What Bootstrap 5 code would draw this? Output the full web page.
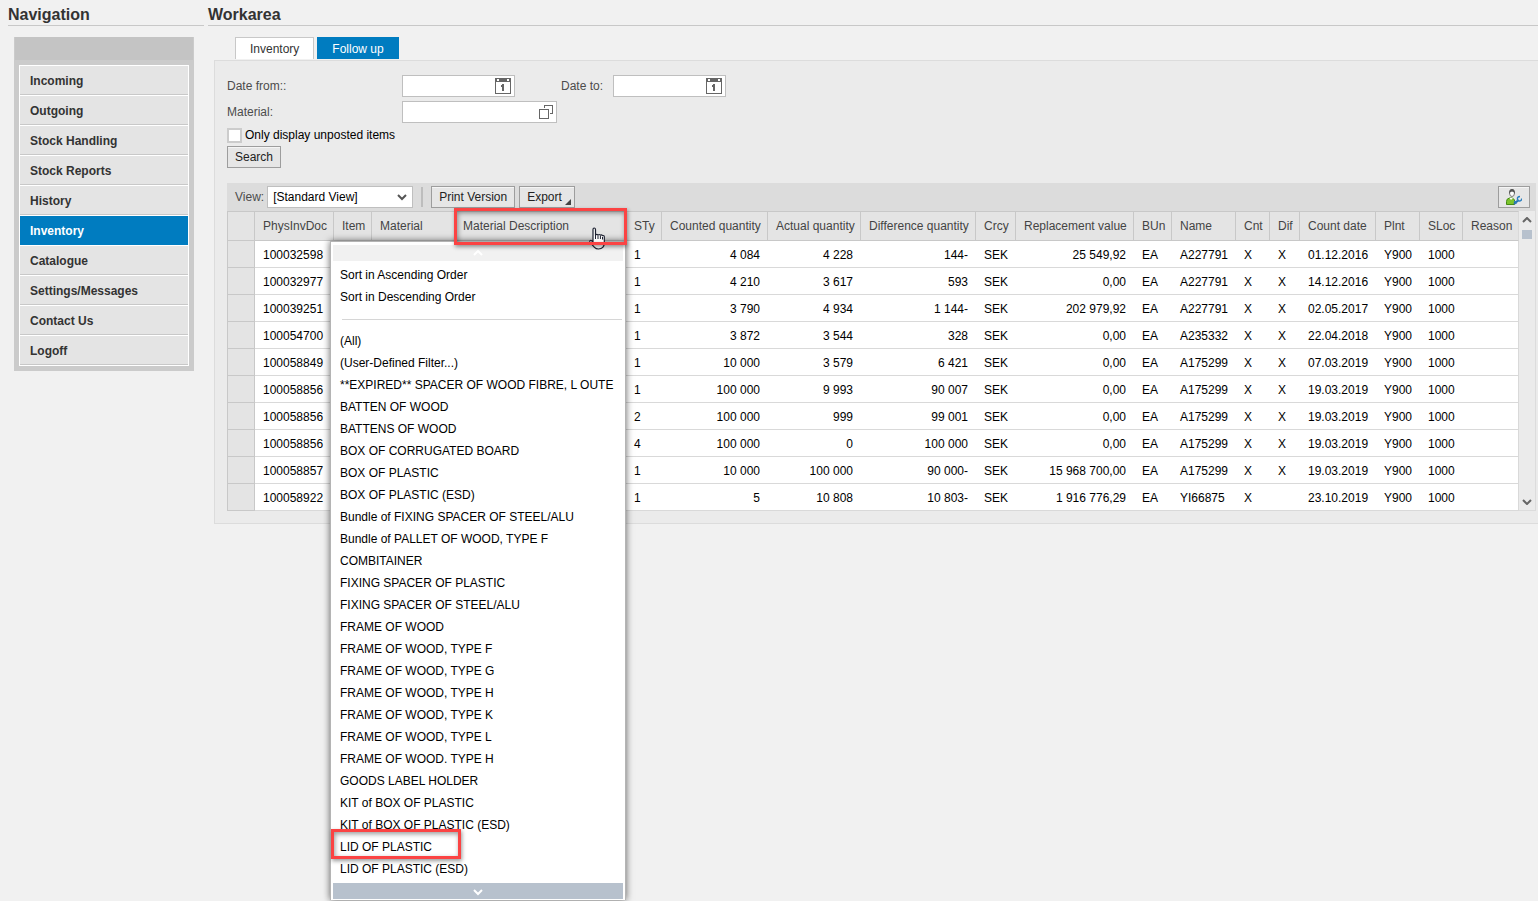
<!DOCTYPE html>
<html lang="en">
<head>
<meta charset="utf-8">
<meta name="viewport" content="width=device-width, initial-scale=1">
<title>Inventory - Follow up</title>
<link href="https://cdn.jsdelivr.net/npm/bootstrap@5.3.0/dist/css/bootstrap.min.css" rel="stylesheet">
<style>
  body { font-family: "Liberation Sans", Arial, sans-serif; font-size: 12px; line-height: 16px; background: #f1f1f1; color: #000; }
  .area-title { font-size: 16px; line-height: 18px; font-weight: 700; color: #333; border-bottom: 1px solid #c8c8c8; margin: 0; padding: 6px 0 1px; }
  .side { width: 196px; }
  .nav-frame { width: 180px; margin: 11px 0 0 6px; background: #cbcbcb; padding: 0 5px 5px; }
  .nav-cap { height: 23px; margin: 0 -4px 5px; background: #c4c4c4; }
  .nav-items { border: 1px solid #fff; border-top: 0; border-radius: 0; }
  .nav-items .list-group-item { border: 0; border-top: 1px solid #fff; border-bottom: 1px solid #c8c8c8; border-radius: 0; margin: 0; height: 30px; padding: 7px 10px 5px; background: #e4e4e4; color: #333; font-weight: 700; }
  .nav-items .list-group-item + .list-group-item.active { margin-top: 0; border-top: 1px solid #fff; background: #007cc0; background-clip: padding-box; color: #fff; border-bottom-color: #007cc0; }
  .tabs { margin: 11px 0 1px 27px; gap: 3px; }
  .tab-btn { height: 22px; border: 1px solid #c8c8c8; border-bottom: 0; background: #fff; color: #333; padding: 0 14px; }
  .tab-btn.active { background: #007cc0; border-color: #007cc0; color: #fff; }
  .panel { margin-left: 6px; background: #ebebeb; border: 1px solid #dcdcdc; border-right: 0; padding: 14px 2px 12px 12px; color: #4c4c4c; }
  .lbl { width: 175px; }
  .lbl-to { width: 52px; margin-left: 46px; }
  .field { position: relative; height: 22px; border: 1px solid #bfbfbf; background: #fff; }
  .field input { width: 100%; height: 20px; border: 0; background: transparent; padding: 0 24px 0 5px; outline: 0; display: block; }
  .field svg { position: absolute; right: 3px; top: 2px; pointer-events: none; }
  .f-date { width: 113px; }
  .f-mat { width: 155px; }
  .tick-row { margin-bottom: 3px; }
  .tick { appearance: none; width: 15px; height: 15px; border: 2px solid #ccc; background: #fff; margin: 0 3px 0 0; }
  .sap-btn { height: 22px; border: 1px solid #9d9d9d; background: #e6e6e6; color: #222; padding: 0 7px; box-shadow: inset 0 1px #f5f5f5; line-height: 20px; display: block; }
  .toolbar { margin-top: 15px; height: 28px; padding: 0 6px 0 8px; background: #dcdcdc; }
  .view-lbl { margin-right: 3px; }
  .view-sel { width: 146px; height: 22px; border: 1px solid #bfbfbf; border-radius: 0; padding: 0 24px 0 5px; font-size: 12px; line-height: 16px; color: #000;
    background: #fff url("data:image/svg+xml,%3Csvg xmlns='http://www.w3.org/2000/svg' width='10' height='7'%3E%3Cpath d='M1 1l4 4 4-4' fill='none' stroke='%23555' stroke-width='2'/%3E%3C/svg%3E") no-repeat right 5px center; background-size: 10px 7px; }
  .sep { width: 2px; height: 20px; background: #bdbdbd; margin: 0 8px; }
  .more { position: relative; }
  .more::after { content: ""; position: absolute; right: 3px; bottom: 2px; border: 3px solid transparent; border-right-color: #444; border-bottom-color: #444; }
  .grid { table-layout: fixed; border-collapse: separate; border-spacing: 0; width: 100%; }
  .grid th, .grid td { padding: 0 8px; white-space: nowrap; }
  .grid th { position: relative; height: 30px; font-weight: 400; color: #444; background: #e4e4e4; border: 1px solid #c8c8c8; border-left: 0; }
  .grid th:first-child { border-left: 1px solid #c8c8c8; }
  .grid td { height: 27px; padding-top: 2px; background: #fff; color: #000; border-bottom: 1px solid #d9d9d9; }
  .grid td:first-child { background: #e4e4e4; border: 1px solid #c8c8c8; border-top: 0; }
  .grid th:last-child { border-right-color: #d9d9d9; }
  .grid td:last-child { border-right: 1px solid #d9d9d9; }
  .n { text-align: right; }
  .vbar { width: 17px; border-right: 1px solid #dcdcdc; border-bottom: 1px solid #dcdcdc; padding: 6px 0 5px; }
  .thumb { width: 10px; height: 9px; background: #b7c1cd; margin-top: 7px; }
  .filter-menu { position: absolute; right: -1px; top: 29px; width: 296px; z-index: 5; background: #fff; border: 1px solid #b4b4b4; border-bottom: 0; box-shadow: 0 0 7px rgba(0,0,0,.6); padding: 3px 2px 1px; color: #000; }
  .menu-cap { height: 16px; background: #f1f1f1; }
  .menu-end { height: 16px; background: #b7c1cd; }
  .filter-menu ul { margin: 3px 0; padding: 0; list-style: none; }
  .filter-menu button { display: block; width: 100%; height: 22px; border: 0; background: none; padding: 0 7px; text-align: left; color: #000; }
  .filter-menu hr { margin: 11px 1px 10px 9px; border: 0; border-top: 1px solid #d6d6d6; opacity: 1; }
  .callout { position: absolute; border: 3px solid #fb4343; pointer-events: none; z-index: 6; box-shadow: 1px 2px 4px rgba(0,0,0,.4), inset 1px 2px 5px rgba(0,0,0,.4); }
  .callout-head { left: -1px; right: -2px; top: -4px; height: 37px; }
  .callout-item { left: -2px; top: -7px; width: 130px; height: 30px; }
  .hand { position: absolute; right: 20px; top: 15px; z-index: 5; }
</style>
</head>
<body>
<div class="d-flex gap-1 ps-2 min-vh-100">
  <aside class="side flex-shrink-0">
    <h1 class="area-title">Navigation</h1>
    <div class="nav-frame">
      <div class="nav-cap"></div>
      <nav class="list-group nav-items">
        <a href="#" class="list-group-item">Incoming</a>
        <a href="#" class="list-group-item">Outgoing</a>
        <a href="#" class="list-group-item">Stock Handling</a>
        <a href="#" class="list-group-item">Stock Reports</a>
        <a href="#" class="list-group-item">History</a>
        <a href="#" class="list-group-item active" aria-current="page">Inventory</a>
        <a href="#" class="list-group-item">Catalogue</a>
        <a href="#" class="list-group-item">Settings/Messages</a>
        <a href="#" class="list-group-item">Contact Us</a>
        <a href="#" class="list-group-item">Logoff</a>
      </nav>
    </div>
  </aside>
  <main class="flex-grow-1">
    <h2 class="area-title">Workarea</h2>
    <div class="d-flex tabs">
      <button type="button" class="tab-btn">Inventory</button>
      <button type="button" class="tab-btn active">Follow up</button>
    </div>
    <section class="panel">
      <form>
        <div class="d-flex align-items-center mb-1">
          <label class="lbl" for="dfrom">Date from::</label>
          <div class="field f-date"><input id="dfrom" type="text">
            <svg width="16" height="16" shape-rendering="crispEdges"><path d="M0 0h16v16H0z" fill="#666"/><path d="M1 4h14v11H1zM2 1h2v2H2zM12 1h2v2h-2z" fill="#fff"/><path d="M7 6h2v7H7V9H6V7h1z" fill="#666"/></svg>
          </div>
          <label class="lbl-to" for="dto">Date to:</label>
          <div class="field f-date"><input id="dto" type="text">
            <svg width="16" height="16" shape-rendering="crispEdges"><path d="M0 0h16v16H0z" fill="#666"/><path d="M1 4h14v11H1zM2 1h2v2H2zM12 1h2v2h-2z" fill="#fff"/><path d="M7 6h2v7H7V9H6V7h1z" fill="#666"/></svg>
          </div>
        </div>
        <div class="d-flex align-items-center mb-1">
          <label class="lbl" for="mat">Material:</label>
          <div class="field f-mat"><input id="mat" type="text">
            <svg width="14" height="16" fill="none" stroke="#666" shape-rendering="crispEdges"><path d="M.5 5.5h9v9h-9zM5.500 4V1.500h8v8H11"/></svg>
          </div>
        </div>
        <div class="d-flex align-items-center tick-row text-black">
          <input class="tick" type="checkbox" id="unposted"><label for="unposted">Only display unposted items</label>
        </div>
        <button type="button" class="sap-btn">Search</button>
      </form>
      <div class="toolbar d-flex align-items-center">
        <label class="view-lbl" for="view">View:</label>
        <select id="view" class="form-select view-sel"><option>[Standard View]</option></select>
        <span class="sep"></span>
        <div class="d-flex gap-1">
          <button type="button" class="sap-btn">Print Version</button>
          <button type="button" class="sap-btn more pe-2 me-0"><span class="me-1">Export</span></button>
        </div>
        <button type="button" class="sap-btn ms-auto" aria-label="Personalize">
          <svg class="d-block" width="16" height="16" viewBox="0 0 16 16"><path d="M.500 15.500v-3q0-3 3-3.500h3l2 2v4.500z" fill="#7cc42c" stroke="#458a12"/><path d="M3.500 9l1.500 2 2-2z" fill="#fff"/><ellipse cx="6" cy="4" rx="2.500" ry="3.500" fill="#fff" stroke="#777"/><path d="M3 5q0-5 3-5t3 5q-1-2.500-3-2.500T3 5z" fill="#555"/><path d="M8 15l4-3.500" fill="none" stroke="#2a6fb0" stroke-width="2.200"/><path d="M14 7.500q-3 0-2.500 3l1.500 1.500q2.500.3 2.700-2.500" fill="none" stroke="#2a7fc0" stroke-width="1.400"/><path d="M8 12.500q2-.5 2.500 2" fill="none" stroke="#2a7fc0" stroke-width="1.200"/></svg>
        </button>
      </div>
      <div class="d-flex">
        <div class="flex-grow-1">
        <table class="grid">
          <colgroup><col style="width:28px"><col style="width:79px"><col style="width:38px"><col style="width:83px"><col style="width:171px"><col style="width:36px"><col style="width:106px"><col style="width:93px"><col style="width:115px"><col style="width:40px"><col style="width:118px"><col style="width:38px"><col style="width:64px"><col style="width:34px"><col style="width:30px"><col style="width:76px"><col style="width:44px"><col style="width:43px"><col></colgroup>
          <thead>
            <tr>
              <th></th><th>PhysInvDoc</th><th>Item</th><th>Material</th>
              <th>Material Description
                <div class="filter-menu">
                  <div class="menu-cap text-center"><svg class="d-block mx-auto" width="10" height="16" fill="none" stroke="#fff" stroke-width="2"><path d="M1 10l4-4 4 4"/></svg></div>
                  <ul>
                    <li><button type="button">Sort in Ascending Order</button></li>
                    <li><button type="button">Sort in Descending Order</button></li>
                    <li><hr></li>
                    <li><button type="button">(All)</button></li>
                    <li><button type="button">(User-Defined Filter...)</button></li>
                    <li><button type="button">**EXPIRED** SPACER OF WOOD FIBRE, L OUTE</button></li>
                    <li><button type="button">BATTEN OF WOOD</button></li>
                    <li><button type="button">BATTENS OF WOOD</button></li>
                    <li><button type="button">BOX OF CORRUGATED BOARD</button></li>
                    <li><button type="button">BOX OF PLASTIC</button></li>
                    <li><button type="button">BOX OF PLASTIC (ESD)</button></li>
                    <li><button type="button">Bundle of FIXING SPACER OF STEEL/ALU</button></li>
                    <li><button type="button">Bundle of PALLET OF WOOD, TYPE F</button></li>
                    <li><button type="button">COMBITAINER</button></li>
                    <li><button type="button">FIXING SPACER OF PLASTIC</button></li>
                    <li><button type="button">FIXING SPACER OF STEEL/ALU</button></li>
                    <li><button type="button">FRAME OF WOOD</button></li>
                    <li><button type="button">FRAME OF WOOD, TYPE F</button></li>
                    <li><button type="button">FRAME OF WOOD, TYPE G</button></li>
                    <li><button type="button">FRAME OF WOOD, TYPE H</button></li>
                    <li><button type="button">FRAME OF WOOD, TYPE K</button></li>
                    <li><button type="button">FRAME OF WOOD, TYPE L</button></li>
                    <li><button type="button">FRAME OF WOOD. TYPE H</button></li>
                    <li><button type="button">GOODS LABEL HOLDER</button></li>
                    <li><button type="button">KIT of BOX OF PLASTIC</button></li>
                    <li><button type="button">KIT of BOX OF PLASTIC (ESD)</button></li>
                    <li class="position-relative"><button type="button">LID OF PLASTIC</button><span class="callout callout-item"></span></li>
                    <li><button type="button">LID OF PLASTIC (ESD)</button></li>
                  </ul>
                  <div class="menu-end"><svg class="d-block mx-auto" width="10" height="16" fill="none" stroke="#fff" stroke-width="2"><path d="M1 7l4 4 4-4"/></svg></div>
                </div>
                <span class="callout callout-head"></span>
                <svg class="hand" width="16" height="25" viewBox="0 0 16 25"><path d="M4 15.500V2.500q0-1.500 1.200-1.500T6.500 2.500V8.500q0-1.200 1.200-1.200T9 8.500q0-1 1.200-1t1.200 1.200q0-.800 1-.800t1.100 1.300q.2-.700.900-.700.900 0 .9 1.300v6q0 3-1.500 4.500t-4.300 1.700q-2.500 0-4-1.700L1 15.500q-.6-1.500.4-2t2.600 2z" fill="#fff" stroke="#1c2030" stroke-width="1.200"/><path d="M6.500 8v4M9 8.500V12M11.400 9v3M13.500 10v2.500" stroke="#1c2030"/></svg>
              </th>
              <th>STy</th><th>Counted quantity</th><th>Actual quantity</th><th>Difference quantity</th><th>Crcy</th><th>Replacement value</th><th>BUn</th><th>Name</th><th>Cnt</th><th>Dif</th><th>Count date</th><th>Plnt</th><th>SLoc</th><th>Reason</th>
            </tr>
          </thead>
          <tbody>
            <tr><td></td><td>100032598</td><td></td><td></td><td></td><td>1</td><td class="n">4 084</td><td class="n">4 228</td><td class="n">144-</td><td>SEK</td><td class="n">25 549,92</td><td>EA</td><td>A227791</td><td>X</td><td>X</td><td>01.12.2016</td><td>Y900</td><td>1000</td><td></td></tr>
            <tr><td></td><td>100032977</td><td></td><td></td><td></td><td>1</td><td class="n">4 210</td><td class="n">3 617</td><td class="n">593</td><td>SEK</td><td class="n">0,00</td><td>EA</td><td>A227791</td><td>X</td><td>X</td><td>14.12.2016</td><td>Y900</td><td>1000</td><td></td></tr>
            <tr><td></td><td>100039251</td><td></td><td></td><td></td><td>1</td><td class="n">3 790</td><td class="n">4 934</td><td class="n">1 144-</td><td>SEK</td><td class="n">202 979,92</td><td>EA</td><td>A227791</td><td>X</td><td>X</td><td>02.05.2017</td><td>Y900</td><td>1000</td><td></td></tr>
            <tr><td></td><td>100054700</td><td></td><td></td><td></td><td>1</td><td class="n">3 872</td><td class="n">3 544</td><td class="n">328</td><td>SEK</td><td class="n">0,00</td><td>EA</td><td>A235332</td><td>X</td><td>X</td><td>22.04.2018</td><td>Y900</td><td>1000</td><td></td></tr>
            <tr><td></td><td>100058849</td><td></td><td></td><td></td><td>1</td><td class="n">10 000</td><td class="n">3 579</td><td class="n">6 421</td><td>SEK</td><td class="n">0,00</td><td>EA</td><td>A175299</td><td>X</td><td>X</td><td>07.03.2019</td><td>Y900</td><td>1000</td><td></td></tr>
            <tr><td></td><td>100058856</td><td></td><td></td><td></td><td>1</td><td class="n">100 000</td><td class="n">9 993</td><td class="n">90 007</td><td>SEK</td><td class="n">0,00</td><td>EA</td><td>A175299</td><td>X</td><td>X</td><td>19.03.2019</td><td>Y900</td><td>1000</td><td></td></tr>
            <tr><td></td><td>100058856</td><td></td><td></td><td></td><td>2</td><td class="n">100 000</td><td class="n">999</td><td class="n">99 001</td><td>SEK</td><td class="n">0,00</td><td>EA</td><td>A175299</td><td>X</td><td>X</td><td>19.03.2019</td><td>Y900</td><td>1000</td><td></td></tr>
            <tr><td></td><td>100058856</td><td></td><td></td><td></td><td>4</td><td class="n">100 000</td><td class="n">0</td><td class="n">100 000</td><td>SEK</td><td class="n">0,00</td><td>EA</td><td>A175299</td><td>X</td><td>X</td><td>19.03.2019</td><td>Y900</td><td>1000</td><td></td></tr>
            <tr><td></td><td>100058857</td><td></td><td></td><td></td><td>1</td><td class="n">10 000</td><td class="n">100 000</td><td class="n">90 000-</td><td>SEK</td><td class="n">15 968 700,00</td><td>EA</td><td>A175299</td><td>X</td><td>X</td><td>19.03.2019</td><td>Y900</td><td>1000</td><td></td></tr>
            <tr><td></td><td>100058922</td><td></td><td></td><td></td><td>1</td><td class="n">5</td><td class="n">10 808</td><td class="n">10 803-</td><td>SEK</td><td class="n">1 916 776,29</td><td>EA</td><td>YI66875</td><td>X</td><td></td><td>23.10.2019</td><td>Y900</td><td>1000</td><td></td></tr>
          </tbody>
        </table>
        </div>
        <div class="vbar d-flex flex-column align-items-center flex-shrink-0">
          <svg width="10" height="6" fill="none" stroke="#666" stroke-width="2"><path d="M1 5l4-4 4 4"/></svg>
          <div class="thumb"></div>
          <svg class="mt-auto" width="10" height="6" fill="none" stroke="#666" stroke-width="2"><path d="M1 1l4 4 4-4"/></svg>
        </div>
      </div>
    </section>
  </main>
</div>
<script src="https://cdn.jsdelivr.net/npm/bootstrap@5.3.0/dist/js/bootstrap.bundle.min.js"></script>
</body>
</html>
